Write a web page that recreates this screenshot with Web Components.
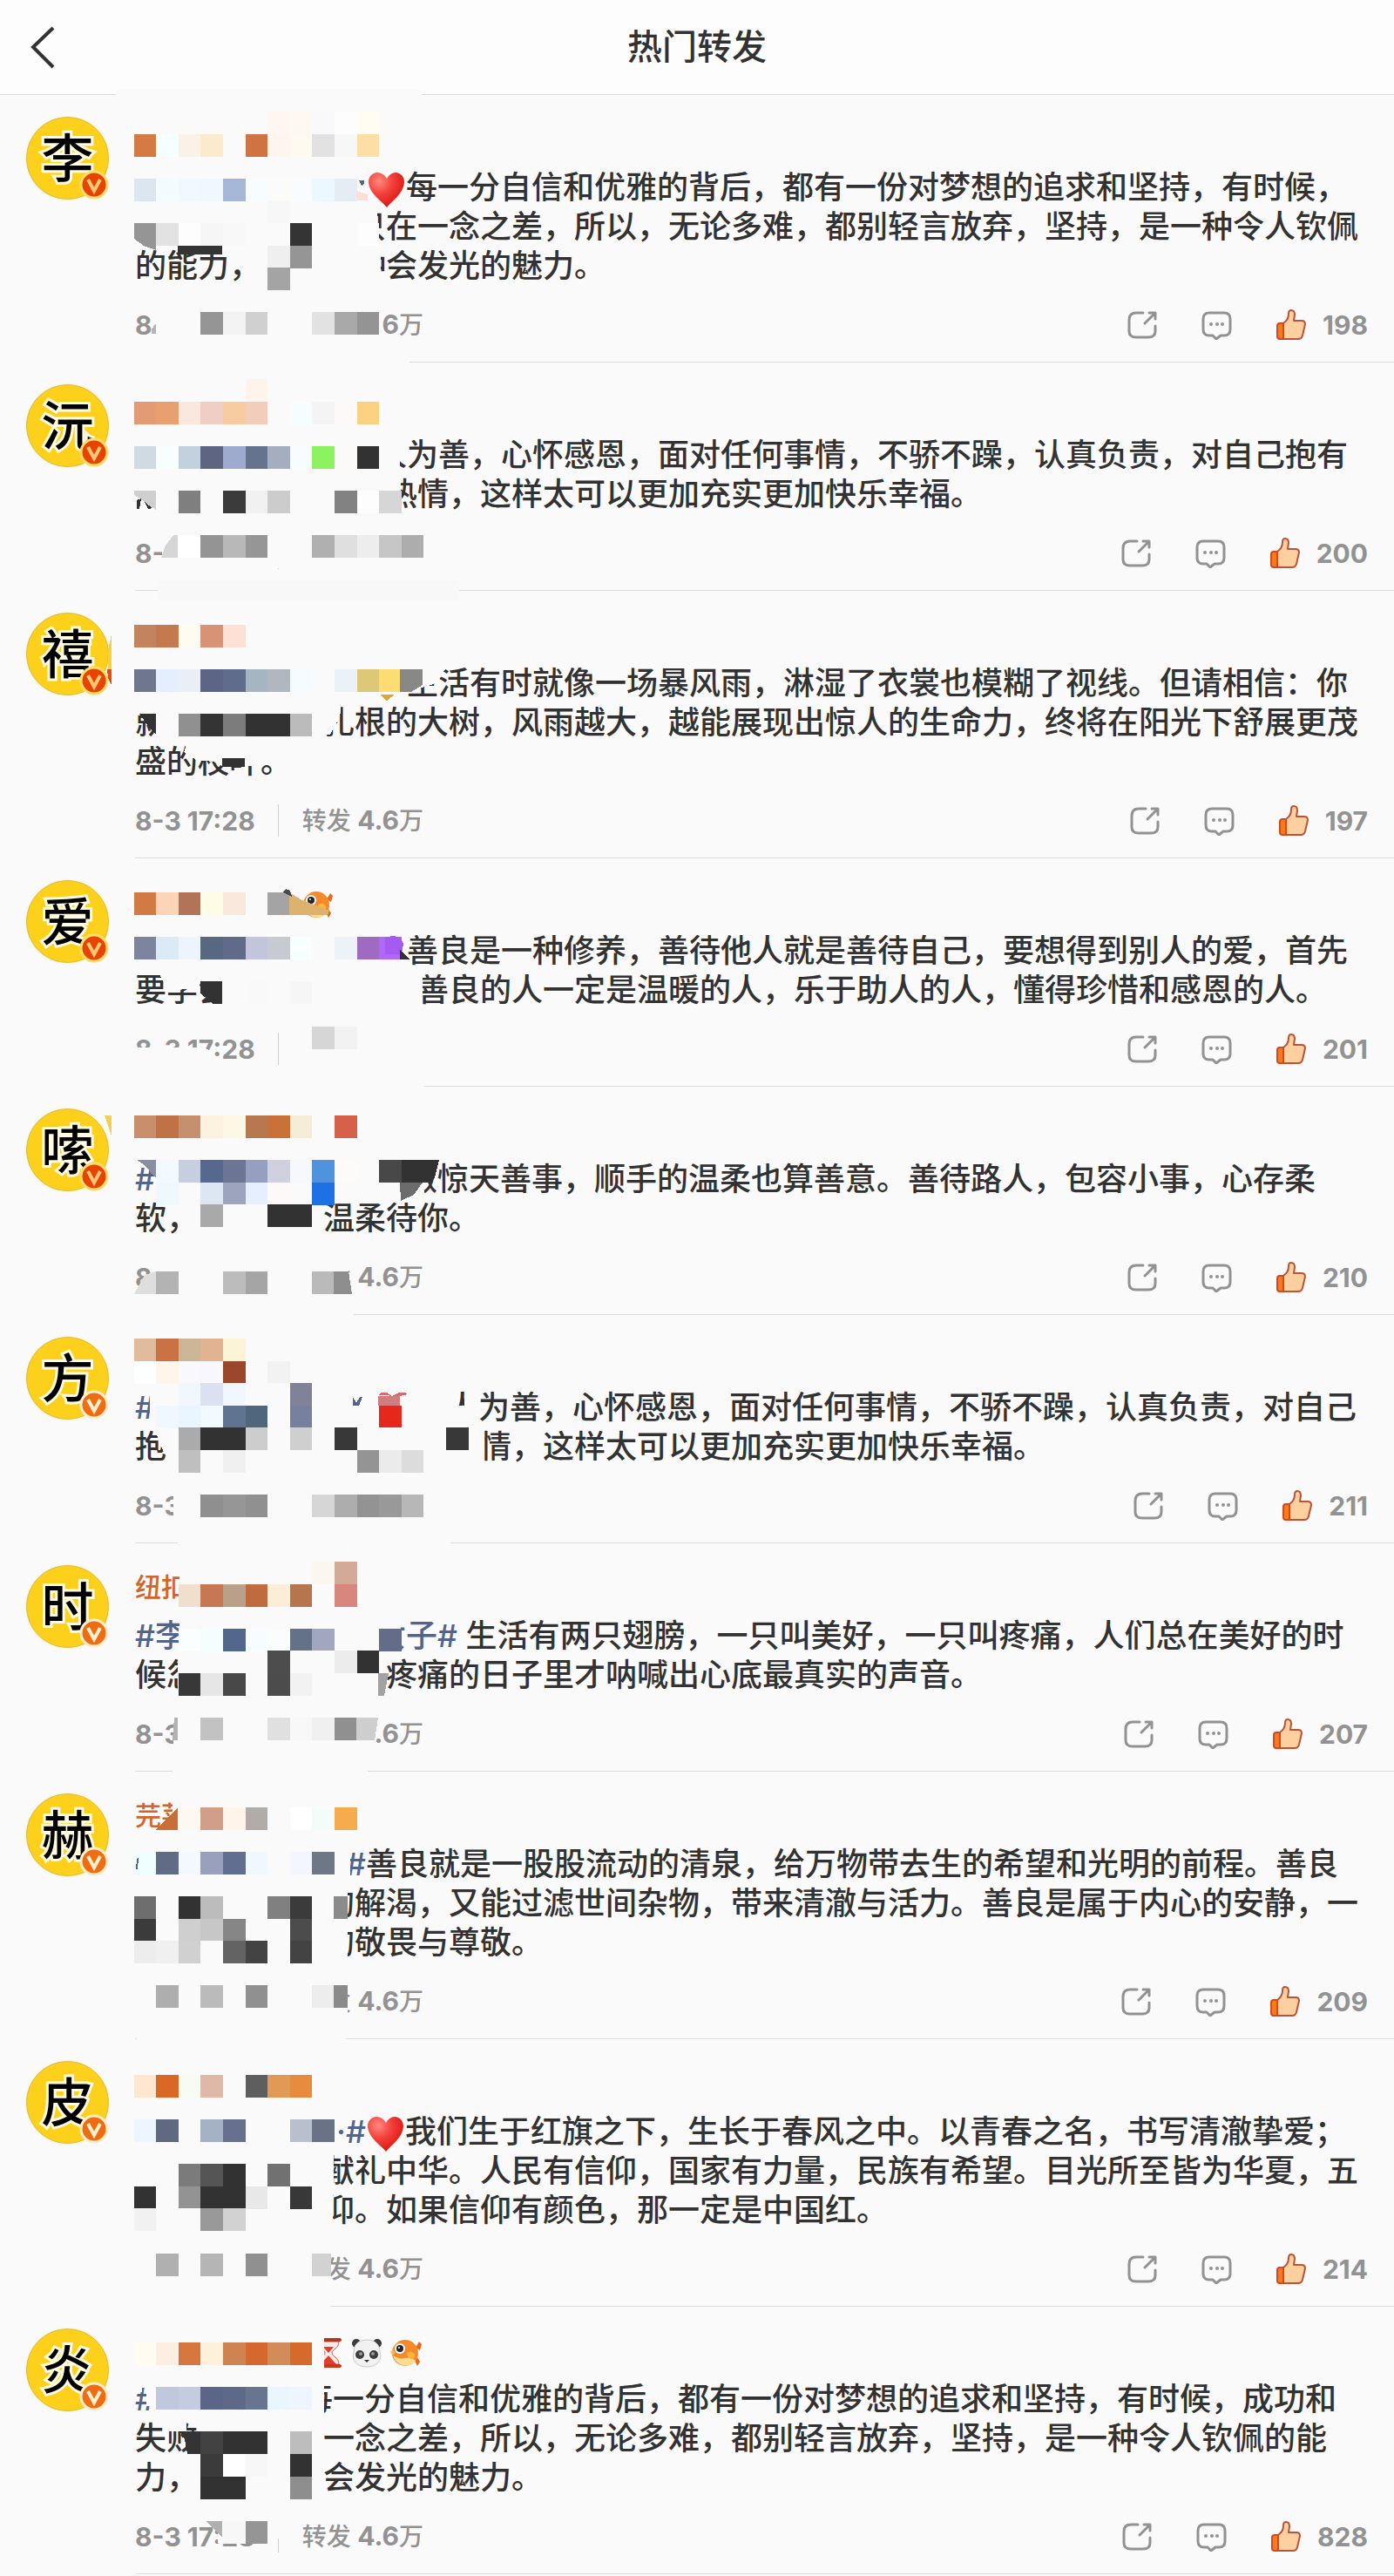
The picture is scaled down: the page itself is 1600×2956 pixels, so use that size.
<!DOCTYPE html>
<html lang="zh-CN">
<head>
<meta charset="utf-8">
<meta name="viewport" content="width=device-width, initial-scale=1">
<title>热门转发</title>
<style>
  body {
    margin: 0;
    background: #fafafa;
    color: #323232;
    font-family: Inter, "Noto Sans CJK SC", sans-serif;
    font-weight: 500;
  }
</style>
</head>
<body>
<top-bar>热门转发</top-bar>
<main>
  <repost-item face="李" likes="198" mosaic="p1">
    <text-gap px="266"></text-gap><emoji-icon name="heart"></emoji-icon>每一分自信和优雅的背后，都有一份对梦想的追求和坚持，有时候，<text-gap px="252"></text-gap>只在一念之差，所以，无论多难，都别轻言放弃，坚持，是一种令人钦佩的能力，<text-gap px="108"></text-gap>种会发光的魅力。
  </repost-item>
  <repost-item face="沅" likes="200" mosaic="p2">
    <text-gap px="276"></text-gap>人为善，心怀感恩，面对任何事情，不骄不躁，认真负责，对自己抱有<text-gap px="288"></text-gap>热情，这样太可以更加充实更加快乐幸福。
  </repost-item>
  <repost-item face="禧" likes="197" mosaic="p3">
    <text-gap px="312"></text-gap>生活有时就像一场暴风雨，淋湿了衣裳也模糊了视线。但请相信：你就<text-gap px="180"></text-gap>扎根的大树，风雨越大，越能展现出惊人的生命力，终将在阳光下舒展更茂盛的枝叶。
  </repost-item>
  <repost-item face="爱" likes="201" mosaic="p4">
    <span slot="name"><text-gap px="191"></text-gap><emoji-icon name="fish"></emoji-icon></span>
    <text-gap px="312"></text-gap>善良是一种修养，善待他人就是善待自己，要想得到别人的爱，首先要学会<text-gap px="216"></text-gap>善良的人一定是温暖的人，乐于助人的人，懂得珍惜和感恩的人。
  </repost-item>
  <repost-item face="嗦" likes="210" mosaic="p5">
    <a href="#">#</a><text-gap px="288"></text-gap>做惊天善事，顺手的温柔也算善意。善待路人，包容小事，心存柔软，<text-gap px="144"></text-gap>温柔待你。
  </repost-item>
  <repost-item face="方" likes="211" mosaic="p6" level="orange">
    <a href="#">#</a><text-gap px="335"></text-gap>人为善，心怀感恩，面对任何事情，不骄不躁，认真负责，对自己抱<text-gap px="360"></text-gap>情，这样太可以更加充实更加快乐幸福。
  </repost-item>
  <repost-item face="时" likes="207" mosaic="p7" level="orange">
    <span slot="name">纽扣</span>
    <a href="#">#李<text-gap px="216"></text-gap>女子#</a> 生活有两只翅膀，一只叫美好，一只叫疼痛，人们总在美好的时候忽<text-gap px="216"></text-gap>疼痛的日子里才呐喊出心底最真实的声音。
  </repost-item>
  <repost-item face="赫" likes="209" mosaic="p8" level="orange">
    <span slot="name">芫荽</span>
    <text-gap px="242"></text-gap><a href="#">#</a>善良就是一股股流动的清泉，给万物带去生的希望和光明的前程。善良<text-gap px="216"></text-gap>的解渴，又能过滤世间杂物，带来清澈与活力。善良是属于内心的安静，一<text-gap px="216"></text-gap>的敬畏与尊敬。
  </repost-item>
  <repost-item face="皮" likes="214" mosaic="p9" level="orange">
    <text-gap px="231"></text-gap><a href="#">·#</a><emoji-icon name="heart"></emoji-icon>我们生于红旗之下，生长于春风之中。以青春之名，书写清澈挚爱；<text-gap px="216"></text-gap>献礼中华。人民有信仰，国家有力量，民族有希望。目光所至皆为华夏，五<text-gap px="216"></text-gap>仰。如果信仰有颜色，那一定是中国红。
  </repost-item>
  <repost-item face="炎" likes="828" mosaic="p10" level="orange">
    <span slot="name"><text-gap px="203"></text-gap><emoji-icon name="hourglass"></emoji-icon><emoji-icon name="panda"></emoji-icon><emoji-icon name="fish"></emoji-icon></span>
    <a href="#">#</a><text-gap px="168"></text-gap>每一分自信和优雅的背后，都有一份对梦想的追求和坚持，有时候，成功和失败<text-gap px="144"></text-gap>一念之差，所以，无论多难，都别轻言放弃，坚持，是一种令人钦佩的能力，<text-gap px="144"></text-gap>会发光的魅力。
  </repost-item>
</main>

<script>
// ---- header ----
class TopBar extends HTMLElement {
  constructor() {
    super();
    this.attachShadow({ mode: 'open' });
    this.shadowRoot.innerHTML = `
    <style>
      :host { display: block; }
      header {
        box-sizing: border-box;
        height: 109px;
        display: grid;
        grid-template-columns: 100px 1fr 100px;
        align-items: center;
        background: #fdfdfd;
        border-bottom: 1px solid #dcdcdc;
      }
      button { border: 0; padding: 0 0 0 32px; background: none; text-align: left; }
      svg { display: block; }
      h1 { margin: 0; font-size: 40px; line-height: 48px; font-weight: 500; text-align: center; }
    </style>
    <header>
      <button type="button" aria-label="返回">
        <svg width="34" height="50" viewBox="0 0 34 50" fill="none" stroke="#323232" stroke-width="4"><path d="M29 3 6 25l23 23"/></svg>
      </button>
      <h1><slot></slot></h1>
    </header>`;
  }
}
customElements.define('top-bar', TopBar);

// ---- blank run inside a line of text ----
class TextGap extends HTMLElement {
  constructor() {
    super();
    this.attachShadow({ mode: 'open' });
    this.shadowRoot.innerHTML = `
    <style>
      :host { display: inline-block; height: 1px; width: var(--gap); }
    </style>`;
  }
  connectedCallback() {
    this.style.setProperty('--gap', this.getAttribute('px') + 'px');
  }
}
customElements.define('text-gap', TextGap);

// ---- emoji ----
const EMOJI = {
  heart: `<svg width="45" height="42" viewBox="0 0 45 42">
    <defs><radialGradient id="g" cx=".3" cy=".25" r=".8"><stop offset="0" stop-color="#ff8a80"/><stop offset=".45" stop-color="#f4423c"/><stop offset="1" stop-color="#d9140f"/></radialGradient></defs>
    <path fill="url(#g)" d="M23 41C18 34 3 26 2 12 2 5 7 1 12 1c5 0 9 3 11 7C25 4 29 1 33 1c6 0 10 5 10 11C42 26 28 34 23 41z"/></svg>`,
  fish: `<svg width="36" height="34" viewBox="0 0 36 34">
    <path fill="#e96a1c" d="M29 11l4-7 3 3-2 7zM28 26l3 6 3-5-3-5z"/>
    <circle cx="17" cy="17" r="15" fill="#f58a2a"/>
    <path fill="#fcdc92" d="M3 20c5 3 9 4 14 3 7-1 10 2 12 3-4 8-21 9-26-6z"/>
    <path fill="#ffb43c" d="M19 17c5-3 10 0 9 5-3 4-8 2-9-5z"/>
    <path fill="#fbb860" d="M0 15c3-2 6 0 5 3-2 2-4 1-5-3z"/>
    <circle cx="11" cy="12" r="6" fill="#fff"/><circle cx="11" cy="12" r="4" fill="#20262c"/><circle cx="10" cy="11" r="1" fill="#fff"/></svg>`,
  panda: `<svg width="36" height="34" viewBox="0 0 36 34">
    <circle cx="6" cy="6" r="5" fill="#3b3b3f"/><circle cx="30" cy="6" r="5" fill="#3b3b3f"/>
    <path d="M18 2c10 0 15 6 15 14 3 10-4 17-15 17S0 26 3 16C3 8 8 2 18 2z" fill="#f1f1f1" stroke="#c9c9c9"/>
    <ellipse cx="10" cy="19" rx="5" ry="5" fill="#3d3d40"/><ellipse cx="26" cy="19" rx="5" ry="5" fill="#3d3d40"/>
    <circle cx="11" cy="18" r="2" fill="#999"/><circle cx="25" cy="18" r="2" fill="#999"/>
    <path d="M15 25h6l-3 3z" fill="#333"/></svg>`,
  hourglass: `<svg width="36" height="34" viewBox="0 0 36 34">
    <path d="M7 4h24c0 8-8 9-8 13s8 5 8 13H7c0-8 8-9 8-13S7 12 7 4z" fill="#fbe9e6" stroke="#c55a48"/>
    <path d="M13 10h12l-6 7zM19 20l9 10H10z" fill="#e23d2a"/>
    <rect x="4" y="0" width="30" height="4" rx="2" fill="#ae3623"/><rect x="4" y="30" width="30" height="4" rx="2" fill="#c4391f"/></svg>`
};
class EmojiIcon extends HTMLElement {
  constructor() {
    super();
    this.attachShadow({ mode: 'open' });
  }
  connectedCallback() {
    this.shadowRoot.innerHTML = `
    <style>
      :host { display: inline-block; vertical-align: middle; margin: -6px 0; line-height: 0; }
      :host([name=fish]), :host([name=panda]), :host([name=hourglass]) { margin-right: 9px; }
    </style>
    ${EMOJI[this.getAttribute('name')]}`;
  }
}
customElements.define('emoji-icon', EmojiIcon);

// ---- round avatar with the V badge ----
class UserFace extends HTMLElement {
  constructor() {
    super();
    this.attachShadow({ mode: 'open' });
    this.shadowRoot.innerHTML = `
    <style>
      :host { display: block; position: relative; width: 95px; height: 95px; --v: #e64400; --ring: #fddc6c; --letter: #fcc878; }
      :host([level=orange]) { --v: #ef6c12; --ring: #fdeecb; --letter: #fff0cf; }
      .disc {
        box-sizing: border-box;
        width: 95px; height: 95px;
        display: grid; place-items: center;
        border-radius: 50%;
        border: 1px solid #d9bb50;
        background: #fcd01b;
        box-shadow: 0 0 3px #fff3b0;
        color: #000;
        font-size: 60px; line-height: 60px; font-weight: 500;
        -webkit-text-stroke: 6px #fffbe0;
        paint-order: stroke fill;
      }
      svg { position: absolute; right: 0; bottom: 0; display: block; }
      path { fill: none; stroke: var(--letter); stroke-width: 4; }
      circle { fill: var(--v); stroke: var(--ring); stroke-width: 3; }
    </style>
    <div class="disc"><slot></slot></div>
    <svg width="34" height="34" viewBox="0 0 34 34"><circle cx="17" cy="17" r="15"/><path d="M10 11l7 13 7-13"/></svg>`;
  }
}
customElements.define('user-face', UserFace);

// ---- blurred-out area over a post ----
// cover: [x, y, w, h, colour]   shape: [points, colour]
// cells: [y, first column, colours], "." is a background cell
const CELL = 256 / 10;
const BG = '#fafafa';
const MOSAIC = {
  p1: {
    cover: [[133, -6, 351, 12], [400, 129, 33, 45], [400, 174, 37, 45], [176, 242, 261, 44], [155, 302, 315, 6]],
    cells: [
      [19, 12, 'fef6f0 fef8f0 f9f9fb fdfdfd fffcf2'],
      [45, 6, 'd37a45 f5ffff fbf1e6 fceacf . d07343 fef6ee fefaf0 e2e2e2 f7f7f7 fddfa6'],
      [96, 6, 'dce6f0 f4fbff f0f9fe f0f8fd a7b7d8 f7fcff fbfbf8 f9fcff ecf8ff e6ecf4'],
      [121, 12, 'f7f7f8'],
      [147, 7, 'e2e2e2 fdfdfd f6f6f6 f8f8f8 . . 343434 . . fdfdfd'],
      [173, 12, 'efefef 959595'],
      [198, 12, 'a4a4a4'],
      [249, 9, '959595 f3f3f3 d0d0d0 . . e2e2e2 a9a9a9 949494']
    ],
    shape: [['154,147 179,147 179,178 165,173 154,165', '#959595'], ['204,173 255,173 255,183 204,183', '#343434'],
      ['409,110 422,114 422,121 409,121', '#fde0d3'], ['412,98 418,98 418,102 415,104', '#51658c'], ['174,269 179,262 179,274 174,274', '#b4b4b4']]
  },
  p2: {
    cover: [[431, 84, 28, 45], [459, 84, 8, 26], [440, 129, 20, 45], [186, 192, 341, 44], [181, 250, 346, 24, '#f8f8f8']],
    cells: [
      [19, 11, 'fdf5ec'],
      [45, 6, 'e39b74 e8a070 fae7dd f0cec5 f7cca1 f2cdbb . f6fdff f4f4f5 fdf9f8 fdd182'],
      [96, 6, 'd0dae2 f8fdff c3d0de 5d6583 9eaace 65738f a4aebf f8fcff 8cf25f fcfaf8 323232'],
      [147, 8, '7f7f7f . 3b3b3b f1f1f1 cccccc . . 828282 fdfdfd d6d6d6'],
      [198, 8, 'ffffff 949494 b8b8b8 969696 . . b0b0b0 dfdfdf ededed c6c6c6 adadad']
    ],
    shape: [['154,147 179,147 179,169 154,152', '#cfcfcf'], ['157,158 162,156 160,168 157,168', '#323232'], ['166,160 175,167 170,168', '#323232'],
      ['199,198 204,198 204,224 185,224 190,210', '#d6d6d6']]
  },
  p3: {
    cover: [[155, 129, 24, 12], [179, 129, 14, 45]],
    cells: [
      [39, 6, 'c4835f c37a4f fefcf0 d99275 fee1d4'],
      [90, 6, '6f778e e5eeff e9eff4 5c6586 606c8b a5b6c2 b1b7bf f6fbff . eaf2f7 ddc878 fddc74'],
      [141, 8, '909090 343434 7c7c7c 323232 323232 bbbbbb']
    ],
    shape: [['467,86 514,86 498,107 475,114 467,114', BG], ['459,90 485,90 485,108 472,116 459,116', '#888886'], ['371,129 392,129 390,145 379,165 371,165', BG],
      ['160,141 179,141 179,165 172,158', '#323232'], ['215,174 300,174 300,201 255,201 245,196 225,194 211,185', BG],
      ['255,192 281,192 281,202 255,202', '#323232'], ['436,119 453,119 444,126', '#d9a932'],
      ['128,50 128,90 124,90 124,68', '#f5cf3c'], ['123,90 128,90 128,108 124,100', '#e64a10']]
  },
  p4: {
    cover: [[227, 129, 38, 12], [255, 129, 10, 45], [479, 129, 6, 45], [155, 217, 76, 22], [336, 196, 160, 44], [153, 256, 334, 6]],
    cells: [
      [39, 6, 'd27a45 fcd4b8 b27459 fffce6 fbe8dd . a4a4a4'],
      [90, 6, '7c849e daebf6 eef4fb 576880 5f6b89 c3c5dc c7cad0 f8ffff . edf2f6 9f6ac2 b068fb'],
      [141, 11, 'f9f9f9 . f6f6f6'],
      [193, 14, 'd6d6d6 f2f2f2']
    ],
    shape: [['180,129 229,129 229,151 193,149', BG], ['230,141 255,141 255,167 245,167 230,155', '#323232'], ['231,216 245,222 238,240 231,240', BG],
      ['332,39 347,48 378,60 376,65 332,65', '#dcb26c'], ['325,39 328,35 333,37 335,44', '#4a4a4c'],
      ['442,90 453,89 460,92 463,98 462,105 459,110 442,110', '#a45cf0'], ['459,104 470,116 459,116', '#323232']]
  },
  p5: {
    cover: [[179, 84, 10, 45], [178, 198, 222, 44], [155, 256, 251, 6]],
    cells: [
      [33, 6, 'c98e6c c07247 c6906e fdf2df fdf7e6 b8784f c87139 f5edd8 . d5614b'],
      [84, 7, 'f2f9ff c6cfe0 57688f 6b7594 95a0c1 cfd2de f7f8fc 4f92de fdfafa . 484848 323232'],
      [110, 7, 'eff8fc . dce7f3 9ca5bd e5efff fdf9f9 . 1e71e4'],
      [135, 9, 'a9a9a9 . . 323232 323232'],
      [212, 7, 'b3b3b3 . . bcbcbc a5a5a5 . . bababa']
    ],
    shape: [['157,84 179,84 179,105 166,90', '#888fa5'], ['467,110 490,110 484,129 467,129', BG], ['485,84 504,84 499,104 494,110 485,110', '#323232'],
      ['459,110 485,110 475,124 460,131', '#6c6c6c'], ['154,238 166,216 179,212 179,238', '#dedede'], ['383,212 400,212 404,238 383,238', '#8e8e8e'], ['120,33 128,33 128,56', '#f0d053']]
  },
  p6: {
    cover: [[172, 84, 9, 45], [513, 84, 14, 45], [533, 84, 16, 45], [527, 104, 22, 25], [551, 129, 5, 45], [199, 198, 318, 44], [204, 256, 313, 6]],
    cells: [
      [27, 6, 'e2bb9c cb7244 cbb797 e1b393 fbf4d6'],
      [53, 6, 'fcfffd fdf6e9 f8f8fd f7f7fd 9b472e . f2f2f2'],
      [78, 8, 'f2f6fd dbe1f0 f2f6ff . . 808398'],
      [104, 7, 'eff8ff eaf6ff f1fbff 607491 50667d . 77809f . . . e6271b'],
      [129, 8, 'ababab 323232 323232 cdcdcd . cfcfcf . 383838 . . . . 383838'],
      [155, 8, 'bfbfbf . f0f0f0 . . . . . 949494 ebebeb dcdcdc'],
      [206, 9, '8f8f8f 969696 909090 . . d6d6d6 adadad 939393 999999 b7b7b7']
    ],
    shape: [['434,93 459,93 459,104 434,104', '#cf7d7e'], ['434,92 438,89 444,89 450,93 458,89 465,89 468,91 459,93', '#d9696a'],
      ['405,94 409,101 413,94 416,94 412,104 405,104', '#51658c'], ['178,129 191,129 191,162 183,148', BG]]
  },
  p7: {
    cover: [[206, 24, 12, 50], [206, 84, 12, 45], [204, 129, 26, 45], [199, 196, 232, 44], [198, 256, 224, 6]],
    cells: [
      [21, 14, 'fbf6f0 d3aa98'],
      [47, 8, 'efdfcc c77853 b8a089 c06a3f fbedd8 b6754c . d7877d'],
      [98, 8, 'fafeff f4fdff 53678c f6fcff fbfdfc 647289 a1a6c1 . . 636d87'],
      [123, 12, '4d4d4d . . ececec 323232'],
      [149, 8, '383838 e6e6e6 484848 . 4c4c4c f2f2f2'],
      [200, 9, 'c2c2c2 . . e0e0e0 f8f8f8 f0f0f0 909090']
    ],
    shape: [['431,84 460,84 460,98 431,98', BG], ['434,149 446,149 441,175 434,175', '#a2a2a2'], ['200,200 204,200 204,226 198,226', '#b2b2b2'], ['409,200 434,200 430,226 409,226', '#cecece']]
  },
  p8: {
    cover: [[198, 24, 20, 50], [394, 84, 8, 45], [371, 129, 28, 90], [155, 242, 244, 44], [157, 300, 240, 8]],
    cells: [
      [41, 8, 'fdf8f0 d19e89 fef4e9 b2aca8 . ffffff f3fcf8 f6ab4d'],
      [92, 6, 'effeff 606b84 f4f8ff 99a0be 626e90 f0f8fd . f3f6ff 6e7786'],
      [143, 6, '6e6e6e . 323232 bcbcbc . . 808080 3b3b3b'],
      [169, 6, '3b3b3b . cfcfcf c7c7c7 868686 . . 4c4c4c'],
      [194, 6, 'ededed f0f0f0 d0d0d0 . 636363 434343 . 434343'],
      [245, 7, 'aeaeae . bbbbbb . 909090 . . ededed']
    ],
    shape: [['178,67 204,41 204,67', '#c86e39'], ['383,143 399,143 399,169 383,169', '#8b8b8b'], ['383,245 399,245 399,271 383,271', '#8a8a8a'], ['157,100 159,98 158,112 156,112', '#51658c']]
  },
  p9: {
    cover: [[371, 129, 12, 45], [371, 174, 11, 45], [155, 242, 225, 44], [155, 302, 224, 6]],
    cells: [
      [41, 6, 'fde7d0 d96826 f8fbf3 dfb8a7 . 5e5e5e e19a56 e78b3f'],
      [92, 6, 'edf6fe 5f6a80 . a5b2c5 67718f . . b8c0cd 6a7287'],
      [143, 8, '7b7b7b 555555 323232 . 717171'],
      [169, 6, '323232 . 939393 323232 323232 e8e8e8 . 383838'],
      [194, 6, 'f1f1f1 . . 999999 d2d2d2'],
      [246, 7, 'b0b0b0 . b5b5b5 . 909090']
    ],
    shape: [['358,246 380,246 380,272 358,272', '#d2d2d2']]
  },
  p10: {
    cover: [[168, 84, 12, 30], [155, 84, 8, 14], [347, 84, 25, 45], [191, 129, 23, 14], [355, 30, 17, 45], [250, 240, 55, 31], [310, 240, 20, 26]],
    cells: [
      [41, 6, 'fefbf1 fceee1 d7763e fef1db ce8350 d5682f d28c5a d6692c'],
      [92, 7, 'c0c8db c4cddf 5b6588 5e6889 67758e eaf6fd eff5ff'],
      [143, 9, '424242 323232 323232 . bdbdbd'],
      [169, 9, '3b3b3b ffffff f7f7f7 . 323232'],
      [195, 9, '323232 323232 . . 8e8e8e'],
      [246, 10, 'f7f7f7 959595']
    ],
    shape: [['206,143 230,143 230,169 215,169 212,152', '#343434'], ['236,246 255,246 255,264', '#b0b0b0']]
  }
};
class PixelMosaic extends HTMLElement {
  constructor() {
    super();
    this.attachShadow({ mode: 'open' });
  }
  connectedCallback() {
    const data = MOSAIC[this.getAttribute('name')];
    const rect = (x, y, w, h, c) => `<rect x="${x}" y="${y}" width="${w}" height="${h}" fill="${c}"/>`;
    let out = data.cover.map(([x, y, w, h, c = BG]) => rect(x, y, w, h, c)).join('');
    data.cells.forEach(([y, col, colours]) => {
      colours.split(' ').forEach((c, i) => {
        const x = Math.round((col + i) * CELL);
        const w = Math.round((col + i + 1) * CELL) - x;
        out += rect(x, y, w, 26, c === '.' ? BG : '#' + c);
      });
    });
    out += data.shape.map(([points, c]) => `<polygon points="${points}" fill="${c}"/>`).join('');
    this.shadowRoot.innerHTML = `
    <style>
      :host { position: absolute; left: 0; top: 0; pointer-events: none; }
      svg { display: block; overflow: visible; }
    </style>
    <svg width="600" height="260" shape-rendering="crispEdges" aria-hidden="true">${out}</svg>`;
  }
}
customElements.define('pixel-mosaic', PixelMosaic);

// ---- one post of the list ----
class RepostItem extends HTMLElement {
  constructor() {
    super();
    this.attachShadow({ mode: 'open' });
  }
  connectedCallback() {
    const level = this.getAttribute('level') || 'red';
    this.shadowRoot.innerHTML = `
    <style>
      :host { display: block; position: relative; }
      article { display: flex; gap: 30px; padding-left: 30px; }
      user-face { flex: none; margin-top: 25px; }
      .main { flex: 1; min-width: 0; padding: 28px 30px 20px 0; border-bottom: 1px solid #dcdcdc; }
      .name { height: 45px; margin-bottom: 11px; font-size: 30px; line-height: 45px; color: #d0662c; }
      .text { margin: 0; padding-right: 6px; font-size: 36px; line-height: 45px; }
      ::slotted(a) { color: #51658c; text-decoration: none; }
      footer { display: flex; align-items: center; height: 45px; margin-top: 22px; font-size: 30px; line-height: 36px; font-weight: 700; color: #929292; }
      .count { margin-left: 26px; padding-left: 27px; border-left: 1px solid #d0d0d0; font-size: 28px; font-weight: 500; }
      b { font-size: 30px; font-weight: 700; }
      .actions { display: flex; gap: 50px; margin-left: auto; }
      button { display: flex; align-items: center; gap: 19px; border: 0; padding: 0; background: none; color: inherit; font: inherit; }
      button svg { display: block; }
    </style>
    <article>
      <user-face level="${level}">${this.getAttribute('face')}</user-face>
      <div class="main">
        <div class="name"><slot name="name"></slot></div>
        <p class="text"><slot></slot></p>
        <footer>
          <time>8-3 17:28</time>
          <span class="count">转发 <b>4.6</b>万</span>
          <div class="actions">
            <button type="button" aria-label="分享">
              <svg width="35" height="34" viewBox="0 0 35 34" fill="none" stroke="#929292" stroke-width="3" stroke-linecap="round" stroke-linejoin="round"><path d="M18 3H10Q2 3 2 11v13q0 7 8 7h14q8 0 8-7v-6M20 15 32 3M25 3h7v7"/></svg>
            </button>
            <button type="button" aria-label="评论">
              <svg width="35" height="34" viewBox="0 0 35 34" fill="none" stroke="#929292" stroke-width="3" stroke-linejoin="round"><path d="M9 3h17q7 0 7 7v12q0 7-7 7h-4l-5 4-4-4H9q-7 0-7-7V10q0-7 7-7z"/><g fill="#929292" stroke="none"><circle cx="11" cy="16" r="2"/><circle cx="18" cy="16" r="2"/><circle cx="24" cy="16" r="2"/></g></svg>
            </button>
            <button type="button">
              <svg width="35" height="36" viewBox="0 0 35 36" stroke="#b85439" stroke-width="2" stroke-linejoin="round"><path fill="#fed0a0" d="M9 16Q15 12 15 5q0-4 3-4 4 0 4 5l-1 7h9q4 0 4 4l-3 13q-1 4-5 4H9z"/><path fill="#fb7b1c" stroke="#d3491b" d="M9 16H5q-3 0-3 3v12q0 3 3 3h4z"/></svg>
              ${this.getAttribute('likes')}
            </button>
          </div>
        </footer>
      </div>
    </article>
    <pixel-mosaic name="${this.getAttribute('mosaic')}"></pixel-mosaic>`;
  }
}
customElements.define('repost-item', RepostItem);
</script>
</body>
</html>
